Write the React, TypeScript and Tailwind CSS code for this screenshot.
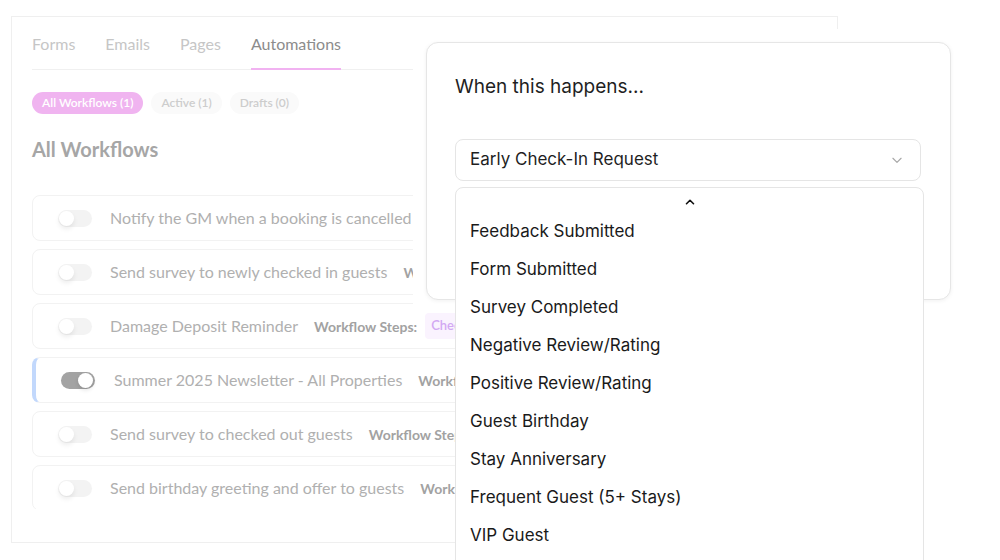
import React from "react";

const rows = [
  { title: "Notify the GM when a booking is cancelled", active: false },
  { title: "Send survey to newly checked in guests", active: false },
  { title: "Damage Deposit Reminder", active: false },
  { title: "Summer 2025 Newsletter - All Properties", active: true },
  { title: "Send survey to checked out guests", active: false },
  { title: "Send birthday greeting and offer to guests", active: false },
];

const options = [
  "Feedback Submitted",
  "Form Submitted",
  "Survey Completed",
  "Negative Review/Rating",
  "Positive Review/Rating",
  "Guest Birthday",
  "Stay Anniversary",
  "Frequent Guest (5+ Stays)",
  "VIP Guest",
];

function Toggle({ on }: { on: boolean }) {
  return (
    <div
      className={
        on
          ? "relative w-[34px] h-[17px] rounded-full bg-[#a3a3a3] shrink-0"
          : "relative w-[34px] h-[17px] rounded-full bg-[#f3f3f3] shrink-0"
      }
    >
      <div
        className={
          on
            ? "absolute right-[2px] top-[1px] w-[15px] h-[15px] rounded-full bg-white shadow-[0_2px_4px_rgba(0,0,0,0.12)]"
            : "absolute left-[1px] top-[1px] w-[15px] h-[15px] rounded-full bg-white shadow-[0_3px_5px_rgba(0,0,0,0.08)]"
        }
      />
    </div>
  );
}

export default function App() {
  return (
    <div className="relative w-[1000px] h-[560px] bg-white overflow-hidden">
      {/* Background page */}
      <div
        className="ml-[11px] mt-[16px] w-[827px] h-[527px] border border-[#efefef] bg-white px-[20px] flex flex-col"
        style={{ fontFamily: "Lato, 'Noto Sans', sans-serif" }}
      >
        <div className="flex gap-[30px] border-b border-[#f0f0f0] pt-[17px]">
          {["Forms", "Emails", "Pages"].map((t) => (
            <div key={t} className="text-[16px] leading-[20px] pb-[14px] text-[#c6c6c6]">
              {t}
            </div>
          ))}
          <div className="text-[16px] leading-[20px] pb-[14px] text-[#8c8c8c] border-b-2 border-[#f1b2f1] -mb-px">
            Automations
          </div>
        </div>

        <div className="flex gap-[8px] mt-[22px]">
          <div className="h-[22px] px-[10px] rounded-full bg-[#f0b4f0] text-white text-[12px] font-semibold flex items-center">
            All Workflows (1)
          </div>
          <div className="h-[22px] px-[10px] rounded-full bg-[#fafafa] text-[#cdcdcd] text-[12px] font-semibold flex items-center">
            Active (1)
          </div>
          <div className="h-[22px] px-[10px] rounded-full bg-[#fafafa] text-[#cdcdcd] text-[12px] font-semibold flex items-center">
            Drafts (0)
          </div>
        </div>

        <div className="mt-[21px] text-[20px] leading-[28px] font-bold text-[#a6a6a6]">All Workflows</div>

        <div className="mt-[32px] h-[314px] overflow-hidden flex flex-col gap-[8px]">
          {rows.map((r, i) => (
            <div
              key={i}
              className={
                r.active
                  ? "h-[46px] shrink-0 flex items-center rounded-lg border border-[#f2f2f2] border-l-4 border-l-[#c2d8fc] pl-[25px] gap-[19px]"
                  : "h-[46px] shrink-0 flex items-center rounded-lg border border-[#f2f2f2] pl-[25px] gap-[18px]"
              }
            >
              <Toggle on={r.active} />
              <div className="flex items-center whitespace-nowrap">
                <span className="text-[16px] text-[#b0b0b0]">{r.title}</span>
                <span className="ml-[16px] text-[14px] font-bold text-[#a2a2a2]">Workflow Steps:</span>
                <span className="ml-[8px] text-[13px] font-semibold text-[#d2a9f3] bg-[#faf3fe] rounded px-[6px] py-[3px]">
                  Check-In Reminder
                </span>
              </div>
            </div>
          ))}
        </div>
      </div>

      {/* Overlay */}
      <div
        className="absolute left-[413px] top-[29px] p-[13px] bg-white"
        style={{ fontFamily: "Inter, 'Noto Sans', sans-serif" }}
      >
        <div className="w-[525px] h-[258px] rounded-[12px] border border-[#e6e6e6] bg-white shadow-[0_1px_4px_rgba(0,0,0,0.06)] pl-[28px] pr-[29px] pt-[30px]">
          <div className="text-[19px] leading-[28px] text-[#1f1f1f]">When this happens...</div>
          <div className="mt-[38px] h-[42px] rounded-[8px] border border-[#e5e5e5] flex items-center justify-between pl-[14px] pr-[16px]">
            <span className="text-[17px] text-[#1f1f1f]">Early Check-In Request</span>
            <svg width="14" height="14" viewBox="0 0 24 24" fill="none" stroke="#a8a8a8" strokeWidth="2" strokeLinecap="round" strokeLinejoin="round">
              <path d="M5 9l7 7 7-7" />
            </svg>
          </div>
        </div>
      </div>

      <div
        className="absolute left-[455px] top-[187px] w-[469px] h-[420px] rounded-t-[8px] border border-[#e5e5e5] bg-white"
        style={{ fontFamily: "Inter, 'Noto Sans', sans-serif" }}
      >
        <div className="flex justify-center pt-[7px] h-[25px]">
          <svg width="14" height="14" viewBox="0 0 24 24" fill="none" stroke="#111" strokeWidth="2.8" strokeLinecap="round" strokeLinejoin="round">
            <path d="M6 15l6-6 6 6" />
          </svg>
        </div>
        <div className="flex flex-col">
          {options.map((o) => (
            <div key={o} className="h-[38px] flex items-center pl-[14px] text-[17px] text-[#1a1a1a]">
              {o}
            </div>
          ))}
        </div>
      </div>
    </div>
  );
}
